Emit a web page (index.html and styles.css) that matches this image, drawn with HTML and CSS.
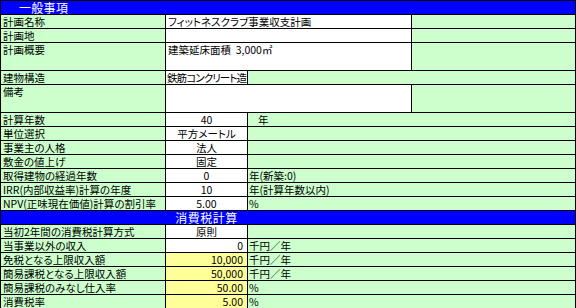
FILE: index.html
```html
<!DOCTYPE html>
<html lang="ja">
<head>
<meta charset="utf-8">
<link rel="stylesheet" href="styles.css">
</head>
<body>
<div class="sheet">
  <div class="row head"><div class="head-title">一般事項</div></div>
  <div class="row">
    <div class="c a">計画名称</div>
    <div class="c bc white">フィットネスクラブ事業収支計画</div>
    <div class="c d"></div>
  </div>
  <div class="row">
    <div class="c a">計画地</div>
    <div class="c bc white"></div>
    <div class="c d"></div>
  </div>
  <div class="row tall">
    <div class="c a">計画概要</div>
    <div class="c bc white">建築延床面積&nbsp;&nbsp;3,000㎡</div>
    <div class="c d"></div>
  </div>
  <div class="row">
    <div class="c a">建物構造</div>
    <div class="c b white tight">鉄筋コンクリート造</div>
    <div class="c cd"></div>
  </div>
  <div class="row tall">
    <div class="c a">備考</div>
    <div class="c bc white"></div>
    <div class="c d"></div>
  </div>
  <div class="row">
    <div class="c a">計算年数</div>
    <div class="c b white center">40</div>
    <div class="c cd"><span class="unit-mid">年</span></div>
  </div>
  <div class="row">
    <div class="c a">単位選択</div>
    <div class="c b white center">平方メートル</div>
    <div class="c cd"></div>
  </div>
  <div class="row">
    <div class="c a">事業主の人格</div>
    <div class="c b white center">法人</div>
    <div class="c cd"></div>
  </div>
  <div class="row">
    <div class="c a">敷金の値上げ</div>
    <div class="c b white center">固定</div>
    <div class="c cd"></div>
  </div>
  <div class="row">
    <div class="c a">取得建物の経過年数</div>
    <div class="c b white center">0</div>
    <div class="c cd">年(新築:0)</div>
  </div>
  <div class="row">
    <div class="c a">IRR(内部収益率)計算の年度</div>
    <div class="c b white center">10</div>
    <div class="c cd">年(計算年数以内)</div>
  </div>
  <div class="row">
    <div class="c a">NPV(正味現在価値)計算の割引率</div>
    <div class="c b white center">5.00</div>
    <div class="c cd">%</div>
  </div>
  <div class="row head"><div class="head-center">消費税計算</div></div>
  <div class="row">
    <div class="c a">当初2年間の消費税計算方式</div>
    <div class="c b white center">原則</div>
    <div class="c cd"></div>
  </div>
  <div class="row">
    <div class="c a">当事業以外の収入</div>
    <div class="c b white right">0</div>
    <div class="c cd">千円／年</div>
  </div>
  <div class="row">
    <div class="c a">免税となる上限収入額</div>
    <div class="c b yellow right">10,000</div>
    <div class="c cd">千円／年</div>
  </div>
  <div class="row">
    <div class="c a">簡易課税となる上限収入額</div>
    <div class="c b yellow right">50,000</div>
    <div class="c cd">千円／年</div>
  </div>
  <div class="row">
    <div class="c a">簡易課税のみなし仕入率</div>
    <div class="c b yellow right">50.00</div>
    <div class="c cd">%</div>
  </div>
  <div class="row">
    <div class="c a">消費税率</div>
    <div class="c b yellow right">5.00</div>
    <div class="c cd">%</div>
  </div>
</div>
</body>
</html>
```
FILE: styles.css
```css
html, body {
  margin: 0;
  padding: 0;
  background: #ffffff;
}
.sheet {
  width: 576px;
  box-sizing: border-box;
  border: 1px solid #000;
  border-bottom: none;
  font-family: "Noto Sans CJK JP", "Noto Sans", sans-serif;
  font-size: 10.5px;
  font-feature-settings: "palt";
  color: #000;
  background: #ccffcc;
}
.row {
  display: flex;
  height: 14px;
  box-sizing: border-box;
  border-bottom: 1px solid #000;
}
.row.tall {
  height: 28px;
}
.c {
  box-sizing: border-box;
  height: 100%;
  line-height: 13px;
  white-space: nowrap;
  overflow: hidden;
  padding: 0 2px;
  background: #ccffcc;
}
.a { width: 165px; border-right: 1px solid #000; }
.b { width: 82px; border-right: 1px solid #000; }
.bc { width: 246px; border-right: 1px solid #000; }
.d { flex: 1; }
.cd { flex: 1; padding-left: 1px; }
.white { background: #ffffff; }
.yellow { background: #ffff99; }
.center { text-align: center; }
.right { text-align: right; padding-right: 4px; }
.tight { letter-spacing: -0.9px; padding-left: 1px; padding-right: 0; }
.unit-mid { padding-left: 9px; }
.head {
  background: #0000ff;
  color: #fff;
  font-size: 12px;
  overflow: hidden;
}
.head-title {
  padding-left: 18px;
  line-height: 13px;
  letter-spacing: 0.3px;
}
.head-center {
  width: 411px;
  text-align: center;
  line-height: 13px;
  letter-spacing: 0.5px;
}
```
